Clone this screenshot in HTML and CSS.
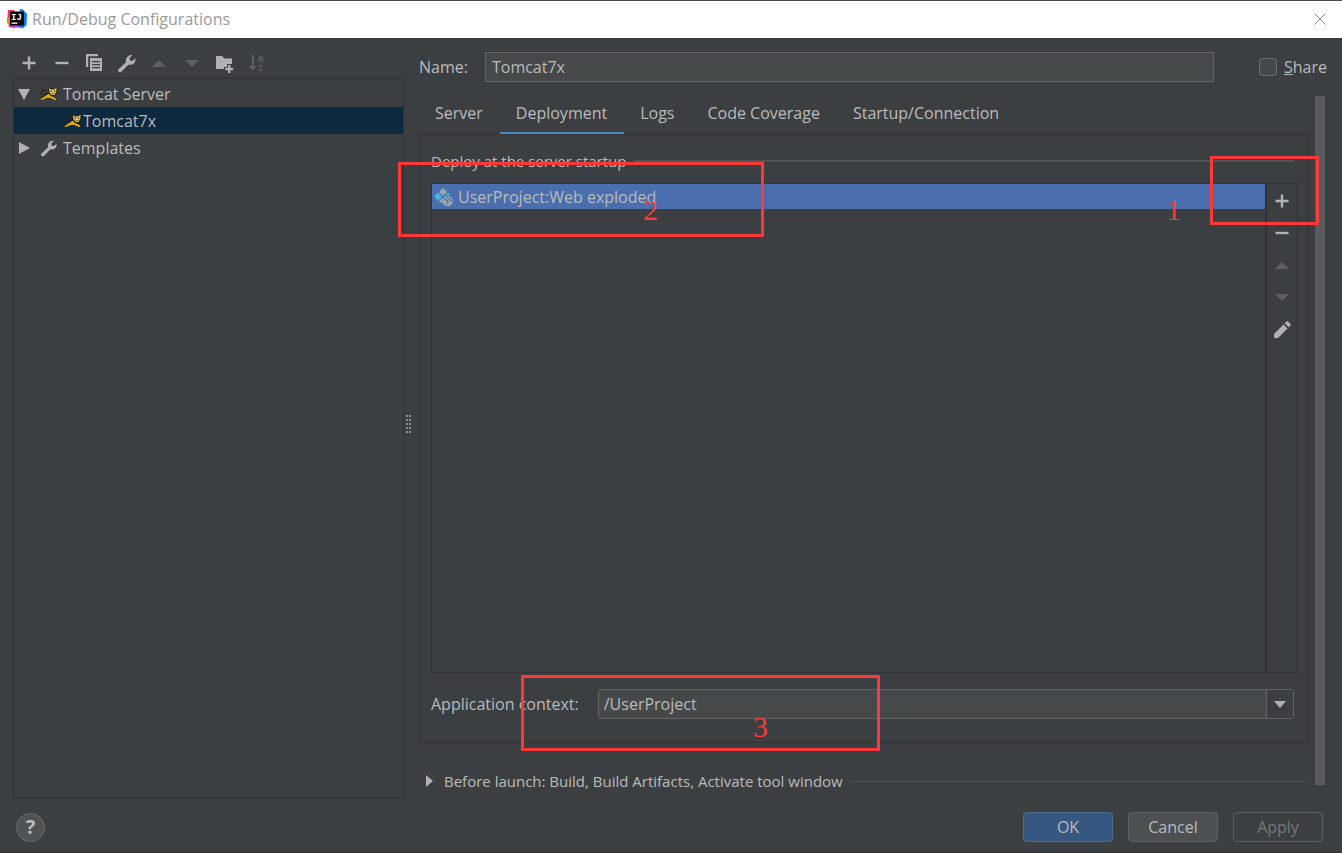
FILE: index.html
```
<!DOCTYPE html>
<html lang="en">

<head>
    <meta charset="utf-8">
    <title>Run/Debug Configurations</title>
    <link rel="stylesheet" href="styles.css">
</head>

<body>
    <!-- shared icons -->
    <svg class="sprite" aria-hidden="true">
        <symbol id="add" viewBox="0 0 20 20">
            <path d="M8.800 3.500h2.400v5.300h5.300v2.400h-5.300v5.300H8.800v-5.300H3.500V8.800h5.300z" />
        </symbol>
        <symbol id="remove" viewBox="0 0 20 20">
            <path d="M3.500 8.800h13v2.400h-13z" />
        </symbol>
        <symbol id="up" viewBox="0 0 20 20">
            <path d="M3 14l7-7 7 7z" />
        </symbol>
        <symbol id="down" viewBox="0 0 20 20">
            <path d="M3 7h14l-7 7z" />
        </symbol>
        <symbol id="wrench" viewBox="0 0 20 20">
            <path d="M1.600 16.200L9 9.300C8.300 6.800 9.300 4.200 11.400 2.900c1.200-.8 2.600-1 3.900-.7L12.600 5l.4 2.500 2.600.4 2.700-2.700c.5 2-.1 4-1.500 5.200-1.400 1.300-3.400 1.600-5.100 1L4.300 18.800c-.8.7-1.900.7-2.600 0-.8-.8-.8-1.900-.1-2.600z" />
        </symbol>
        <symbol id="tomcat" viewBox="0 0 18 14">
            <path d="M2.500 8C.5 6 1.500 3 4 3l2 1" fill="none" stroke="#222" stroke-width="1" />
            <path d="M0 12l4-4 4-3 4 4 4 1 1.500 3h-3l-4-1.500-4 0-6 2z" fill="#1d1a12" />
            <path d="M0 12.500L5 9l4-2.500 2 2.500 4 1.500L16.500 13h-2l-4-2H7l-5 2z" fill="#d9a61c" />
            <path d="M8 0l2.500 1.500h2.500L17.500 0l-.5 5.500L14.500 9H11L8.500 6z" fill="#2a2414" />
            <path d="M9 1.200l2 1.300h2.500L16.500 1l-.3 4-1.900 3h-2.600L9.500 5z" fill="#e6c75f" />
            <path d="M10.800 3.500H12v1.300h-1.200zM14 3.500h1.200v1.300H14zM12.300 6h1.400v1h-1.400z" fill="#222" />
        </symbol>
    </svg>

    <div class="dialog">
        <header class="title-bar">
            <svg class="logo" viewBox="0 0 20 20" aria-hidden="true">
                <path d="M1 1l6 0 4 8-3 10-6-1L1 13 .5 8z" fill="#fe315d" />
                <path d="M0 8l4 1-1 7-3-2z" fill="#f97a12" />
                <path d="M13 0l3 .5L20 5l-.5 11-4 3.500-5-2z" fill="#087cfa" />
                <path d="M6 16h5l2 3-4-.5L5 19z" fill="#b74af7" />
                <path d="M3 2.500h14v14H3z" fill="#000" />
                <text x="4" y="10.500">IJ</text>
                <path d="M4.500 13.500h6v1.300h-6z" fill="#fff" />
            </svg>
            <span class="title">Run/Debug Configurations</span>
            <button class="close" aria-label="Close">
                <svg viewBox="0 0 12 12"><path d="M.5.5l11 11M11.500.5l-11 11" /></svg>
            </button>
        </header>

        <div class="content">
            <aside class="sidebar">
                <div class="toolbar">
                    <button class="icon-btn" aria-label="Add"><svg><use href="#add" /></svg></button>
                    <button class="icon-btn" aria-label="Remove"><svg><use href="#remove" /></svg></button>
                    <button class="icon-btn" aria-label="Copy">
                        <svg viewBox="0 0 20 20">
                            <path d="M2 1h12v2.200H4.200V14H2z" />
                            <path fill-rule="evenodd" d="M6 5h12v13H6zM8 8v1.200h8V8zM8 11v1.200h8V11zM8 14v1.200h8V14z" />
                        </svg>
                    </button>
                    <button class="icon-btn" aria-label="Edit templates"><svg><use href="#wrench" /></svg></button>
                    <button class="icon-btn" aria-label="Move up" disabled><svg><use href="#up" /></svg></button>
                    <button class="icon-btn" aria-label="Move down" disabled><svg><use href="#down" /></svg></button>
                    <button class="icon-btn" aria-label="New folder">
                        <svg viewBox="0 0 20 20">
                            <path d="M2 3h6l2.500 2.500H18v5.500h-5v3h-3v2H2z" />
                            <path d="M14 12h2.400v2.800h2.800v2.400h-2.800V20H14v-2.800h-2.800v-2.400H14z" />
                        </svg>
                    </button>
                    <button class="icon-btn sort" aria-label="Sort configurations" disabled>
                        <svg viewBox="0 0 20 20">
                            <path d="M4.800 2H7v11h3l-4.200 5L1.500 13h3.300z" />
                            <text x="11" y="9">a</text>
                            <text x="11" y="18">z</text>
                        </svg>
                    </button>
                </div>
                <ul class="tree">
                    <li class="row">
                        <svg class="arrow" viewBox="0 0 12 12"><path d="M0 1h12L6 12z" /></svg>
                        <svg class="cat"><use href="#tomcat" /></svg>
                        <span>Tomcat Server</span>
                    </li>
                    <li class="row child selected">
                        <svg class="cat"><use href="#tomcat" /></svg>
                        <span>Tomcat7x</span>
                    </li>
                    <li class="row">
                        <svg class="arrow" viewBox="0 0 12 12"><path d="M1 0v12l11-6z" /></svg>
                        <svg class="cat"><use href="#wrench" /></svg>
                        <span>Templates</span>
                    </li>
                </ul>
            </aside>

            <div class="splitter"><span class="grip"></span></div>

            <main class="editor">
                <div class="name-row">
                    <label for="name">Name:</label>
                    <input class="field" id="name" type="text" value="Tomcat7x">
                    <label class="share"><input type="checkbox"><span><u>S</u>hare</span></label>
                </div>

                <div class="scroll-area">
                    <div class="settings">
                        <nav class="tabs">
                            <button class="tab">Server</button>
                            <button class="tab active">Deployment</button>
                            <button class="tab">Logs</button>
                            <button class="tab">Code Coverage</button>
                            <button class="tab">Startup/Connection</button>
                        </nav>

                        <section class="panel">
                            <div class="legend">Deploy at the server startup</div>
                            <div class="artifacts">
                                <ul class="artifact-list">
                                    <li class="artifact">
                                        <svg viewBox="0 0 20 20">
                                            <path d="M9 1l4 4-4 4-4-4z" fill="#9aa7b0" />
                                            <path d="M4 5.500l4 4-4 4-4-4z" fill="#40b6e0" />
                                            <path d="M14 5.500l2.500 2.500-4 0-1.500 1z" fill="#40b6e0" />
                                            <path d="M8.500 10.500l-1 6L5 14z" fill="#9aa7b0" />
                                            <circle cx="13.500" cy="14" r="5.300" fill="#9aa7b0" />
                                            <path d="M9.500 11.500c2 0 2 2 3.500 2s1 2 0 4M13.500 9.500c-.5 2 1 2.500 2.500 2.200l1 2.300h1.500" fill="none" stroke="#4b6eaf" stroke-width="1.100" />
                                        </svg>
                                        <span>UserProject:Web exploded</span>
                                    </li>
                                </ul>
                                <div class="side-tools">
                                    <button class="icon-btn" aria-label="Add artifact"><svg><use href="#add" /></svg></button>
                                    <button class="icon-btn" aria-label="Remove artifact"><svg><use href="#remove" /></svg></button>
                                    <button class="icon-btn" aria-label="Move artifact up" disabled><svg><use href="#up" /></svg></button>
                                    <button class="icon-btn" aria-label="Move artifact down" disabled><svg><use href="#down" /></svg></button>
                                    <button class="icon-btn" aria-label="Edit artifact">
                                        <svg viewBox="0 0 20 20">
                                            <path d="M2 15L11.500 5.500l4 4L6 19H2z" />
                                            <path d="M12.700 4.300l1.600-1.600c.6-.6 1.400-.6 2 0l2 2c.6.6.6 1.400 0 2l-1.600 1.600z" />
                                        </svg>
                                    </button>
                                </div>
                            </div>
                            <div class="context-row">
                                <label for="context">Application context:</label>
                                <div class="combo">
                                    <select id="context">
                                        <option>/UserProject</option>
                                    </select>
                                    <span class="combo-arrow"><svg viewBox="0 0 12 7"><path d="M0 0h12L6 7z" /></svg></span>
                                </div>
                            </div>
                        </section>

                        <button class="before-launch">
                            <svg viewBox="0 0 7 12"><path d="M0 0v12l7-6z" /></svg>
                            <span>Before launch: Build, Build Artifacts, Activate tool window</span>
                        </button>
                    </div>
                    <div class="scrollbar"></div>
                </div>
            </main>
        </div>

        <footer class="footer">
            <button class="help" aria-label="Help">?</button>
            <button class="btn primary">OK</button>
            <button class="btn">Cancel</button>
            <button class="btn" disabled>Apply</button>
        </footer>

        <!-- step markers -->
        <div class="mark mark-add"></div>
        <div class="mark mark-artifact"></div>
        <div class="mark mark-context"></div>
        <span class="step step-1">1</span>
        <span class="step step-2">2</span>
        <span class="step step-3">3</span>
    </div>
</body>

</html>
```
FILE: styles.css
```
* {
    box-sizing: border-box;
}

body {
    margin: 0;
    font-family: "Open Sans", "Noto Sans", sans-serif;
    font-size: 16px;
    line-height: 22px;
    background: #3c3f41;
    color: #bbbbbb;
}

button,
input,
select {
    font: inherit;
    color: inherit;
    margin: 0;
}

button {
    padding: 0;
    border: none;
    background: none;
}

ul {
    list-style: none;
    margin: 0;
    padding: 0;
}

svg {
    display: block;
    flex: none;
    fill: #afb1b3;
}

.sprite {
    position: absolute;
    width: 0;
    height: 0;
}

.dialog {
    position: relative;
    display: flex;
    flex-direction: column;
    min-height: 100vh;
    border-bottom: 1px solid #323232;
}

/* title bar */
.title-bar {
    display: flex;
    align-items: center;
    gap: 5px;
    height: 38px;
    padding: 0 16px 2px 7px;
    border-top: 1px solid #4b4b4b;
    background: #ffffff;
    color: #999999;
}

.logo {
    width: 20px;
    height: 20px;
}

.logo text {
    font-family: "Liberation Mono", monospace;
    font-size: 9px;
    font-weight: bold;
    fill: #ffffff;
}

.title {
    flex: 1;
}

.close svg {
    width: 12px;
    height: 12px;
    fill: none;
    stroke: #888888;
}

.content {
    flex: 1;
    display: flex;
}

/* left side */
.sidebar {
    width: 391px;
    margin-left: 13px;
    display: flex;
    flex-direction: column;
}

.toolbar {
    display: flex;
    justify-content: space-between;
    align-items: center;
    width: 248px;
    height: 40px;
    margin-left: 6px;
    padding-top: 10px;
}

.icon-btn,
.icon-btn svg {
    width: 20px;
    height: 20px;
}

.icon-btn:disabled svg {
    fill: #5c5e60;
}

.sort text {
    font-family: "Liberation Sans", sans-serif;
    font-size: 10px;
    font-weight: bold;
}

.tree {
    flex: 1;
    padding-top: 1px;
    border: 1px solid #2f3133;
}

.row {
    display: flex;
    align-items: center;
    height: 27px;
    padding-left: 4px;
}

.arrow {
    width: 12px;
    height: 12px;
    margin-right: 10px;
}

.cat {
    width: 18px;
    height: 18px;
    margin-right: 5px;
}

.child {
    padding-left: 50px;
}

.child .cat {
    margin-right: 1px;
}

.selected {
    background: #0d293e;
}

.splitter {
    display: flex;
    align-items: center;
    width: 15px;
    padding: 12px 0 0 2px;
}

.grip {
    width: 5px;
    height: 18px;
    border-left: 2px dotted #8a8c8d;
    border-right: 2px dotted #8a8c8d;
}

/* right side */
.editor {
    flex: 1;
    display: flex;
    flex-direction: column;
    padding-top: 14px;
}

.name-row {
    display: flex;
    align-items: center;
    gap: 17px;
    padding-right: 15px;
}

.field {
    flex: 1;
    min-width: 0;
    height: 30px;
    padding: 0 6px;
    border: 1px solid #646464;
    background: #45494a;
}

.share {
    display: flex;
    align-items: center;
    gap: 7px;
    margin-left: 28px;
}

.share input {
    appearance: none;
    width: 18px;
    height: 18px;
    border: 1px solid #6b6b6b;
    border-radius: 3px;
    background: #43494a;
}

.scroll-area {
    flex: 1;
    display: flex;
    gap: 6px;
    margin-top: 14px;
    padding-right: 17px;
}

.settings {
    flex: 1;
    display: flex;
    flex-direction: column;
}

.scrollbar {
    width: 10px;
    margin-bottom: 13px;
    background: #595b5d;
}

.tabs {
    display: flex;
    height: 38px;
}

.tab {
    height: 39px;
    padding: 0 17px 2px 16px;
    border-bottom: 3px solid transparent;
}

.tab.active {
    border-bottom-color: #4a88c7;
}

.panel {
    flex: 1;
    display: flex;
    flex-direction: column;
    padding: 15px 10px 23px 11px;
    border: 1px solid #323232;
}

.legend,
.before-launch {
    display: flex;
    align-items: center;
    gap: 8px;
    font-size: 15px;
}

.legend {
    padding-right: 4px;
}

.legend::after,
.before-launch::after {
    content: "";
    flex: 1;
    height: 1px;
    background: #515355;
}

.legend::after {
    height: 2px;
}

.artifacts {
    flex: 1;
    display: flex;
    margin-top: 11px;
    border: 1px solid #323232;
}

.artifact-list {
    flex: 1;
    border-right: 2px solid #323232;
}

.artifact {
    display: flex;
    align-items: center;
    gap: 4px;
    height: 25px;
    padding-left: 2px;
    background: #4b6eaf;
}

.artifact svg {
    width: 20px;
    height: 20px;
}

.side-tools {
    display: flex;
    flex-direction: column;
    align-items: center;
    gap: 12px;
    width: 30px;
    padding-top: 7px;
}

.context-row {
    display: flex;
    align-items: center;
    gap: 19px;
    margin-top: 16px;
    padding-right: 4px;
}

.combo {
    flex: 1;
    display: grid;
    grid-template-columns: 1fr 28px;
}

.combo select {
    grid-area: 1 / 1 / 2 / 3;
    appearance: none;
    height: 30px;
    padding: 0 5px;
    border: 1px solid #646464;
    border-radius: 3px;
    background: #45494a;
}

.combo-arrow {
    grid-area: 1 / 2 / 2 / 3;
    display: flex;
    align-items: center;
    justify-content: center;
    margin: 1px 1px 1px 0;
    border-left: 1px solid #646464;
    background: #3c3f41;
    pointer-events: none;
}

.combo-arrow svg {
    width: 12px;
    height: 7px;
}

.before-launch {
    height: 22px;
    margin: 27px 3px 6px 7px;
    text-align: left;
}

.before-launch svg {
    width: 7px;
    height: 12px;
    margin-right: 3px;
}

/* bottom buttons */
.footer {
    display: flex;
    align-items: center;
    gap: 15px;
    padding: 14px 19px 10px 16px;
}

.help {
    width: 29px;
    height: 29px;
    margin-right: auto;
    border: 1px solid #6a6c6d;
    border-radius: 50%;
    background: #4e5254;
    font-size: 20px;
    font-weight: bold;
}

.btn {
    width: 90px;
    height: 30px;
    border: 1px solid #5e6060;
    border-radius: 4px;
    background: #4c5052;
}

.btn.primary {
    border-color: #4c708c;
    background: #365880;
}

.btn:disabled {
    background: none;
    color: #777777;
}

/* red step markers lie over the dialog */
.mark {
    position: absolute;
    border: 3px solid #ff3838;
    pointer-events: none;
}

.mark-add {
    top: 156px;
    right: 23px;
    width: 109px;
    height: 69px;
}

.mark-artifact {
    top: 162px;
    left: 398px;
    width: 366px;
    height: 75px;
}

.mark-context {
    bottom: 101px;
    left: 521px;
    width: 359px;
    height: 76px;
}

.step {
    position: absolute;
    font-family: "Liberation Serif", serif;
    font-size: 30px;
    line-height: 30px;
    color: #ff3838;
}

.step-1 {
    top: 195px;
    right: 161px;
}

.step-2 {
    top: 195px;
    left: 643px;
}

.step-3 {
    bottom: 110px;
    left: 753px;
}
```
